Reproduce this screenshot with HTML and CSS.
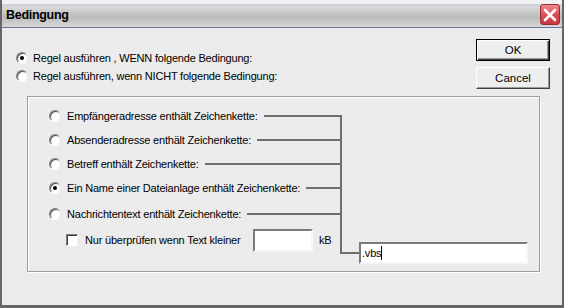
FILE: index.html
```html
<!DOCTYPE html>
<html lang="de">
<head>
    <meta charset="UTF-8">
    <title>Bedingung</title>
    <link rel="stylesheet" href="styles.css">
</head>
<body>
    <div class="window">
        <div class="titlebar">
            <span class="title">Bedingung</span>
            <span class="close-btn">
                <svg width="14" height="14" viewBox="0 0 14 14">
                    <path d="M2 2 L12 12 M12 2 L2 12" stroke="#fff" stroke-width="2.6" stroke-linecap="round"/>
                </svg>
            </span>
        </div>
        <div class="dialog-body">
            <div class="top">
                <div class="mode">
                    <div class="choice"><span class="radio checked"></span>Regel ausführen , WENN folgende Bedingung:</div>
                    <div class="choice"><span class="radio"></span>Regel ausführen, wenn NICHT folgende Bedingung:</div>
                </div>
                <div class="buttons">
                    <button class="btn default">OK</button>
                    <button class="btn">Cancel</button>
                </div>
            </div>

            <div class="group">
                <div class="tree-area">
                    <div class="tree">
                        <div class="option"><span class="radio"></span>Empfängeradresse enthält Zeichenkette:<span class="wire"></span></div>
                        <div class="option"><span class="radio"></span>Absenderadresse enthält Zeichenkette:<span class="wire"></span></div>
                        <div class="option"><span class="radio"></span>Betreff enthält Zeichenkette:<span class="wire"></span></div>
                        <div class="option"><span class="radio checked"></span>Ein Name einer Dateianlage enthält Zeichenkette:<span class="wire"></span></div>
                        <div class="option last"><span class="radio"></span>Nachrichtentext enthält Zeichenkette:<span class="wire"></span></div>
                        <div class="size-row">
                            <span class="checkbox"></span>
                            <span class="size-label">Nur überprüfen wenn Text kleiner</span>
                            <span class="field small"></span>
                            <span class="unit">kB</span>
                        </div>
                    </div>
                    <div class="target">
                        <span class="stub"></span>
                        <span class="field big">.vbs<span class="caret"></span></span>
                    </div>
                </div>
            </div>
        </div>
    </div>
</body>
</html>
```

FILE: styles.css
```css
body {
    margin: 0;
    font-family: "Liberation Sans", Arial, sans-serif;
    font-size: 11px;
    letter-spacing: -0.2px;
    color: #000;
}
.window {
    width: 564px;
    height: 308px;
    box-sizing: border-box;
    border: 2px solid #666;
    border-top: 0;
    border-bottom-width: 3px;
    background-color: #ececec;
    background-image: repeating-conic-gradient(#e9e9e9 0 25%, #eeeeee 0 50%);
    background-size: 2px 2px;
    display: flex;
    flex-direction: column;
}
.titlebar {
    height: 28px;
    border-bottom: 1px solid #7070a8;
    background: linear-gradient(#f2f2f2 0, #f2f2f2 4px, #b9b9d0 5px, #dcdcdc 6px, #c9c9c9 45%, #bcbcbc 65%, #d8d8d8 100%);
    display: flex;
    align-items: center;
    padding: 2px 2px 0 4px;
    box-sizing: border-box;
}
.title {
    font-weight: bold;
    font-size: 12.5px;
    letter-spacing: -0.3px;
    flex: 1;
}
.close-btn {
    width: 20px;
    height: 21px;
    box-sizing: border-box;
    border: 1px solid #9a2a30;
    border-radius: 3px;
    background: linear-gradient(#f08a8f, #d94a52 55%, #c83840);
    display: flex;
    align-items: center;
    justify-content: center;
}
.dialog-body {
    flex: 1;
    padding: 11px 12px 0 14px;
}
.top {
    display: flex;
    align-items: flex-start;
}
.mode {
    margin-top: 10px;
    flex: 1;
}
.choice {
    height: 18px;
    display: flex;
    align-items: center;
    gap: 5px;
}
.radio {
    width: 12px;
    height: 12px;
    box-sizing: border-box;
    border-radius: 50%;
    border: 1px solid;
    border-color: #808080 #e8e8e8 #ffffff #808080;
    background: radial-gradient(circle at 60% 60%, #ffffff 40%, #d8d8d8 100%);
    box-shadow: inset 1px 1px 0 #5a5a5a;
    display: inline-flex;
    align-items: center;
    justify-content: center;
    flex: none;
}
.radio.checked::after {
    content: "";
    width: 4px;
    height: 4px;
    border-radius: 50%;
    background: #000;
}
.buttons {
    display: flex;
    flex-direction: column;
    gap: 6px;
}
.btn {
    width: 74px;
    height: 22px;
    font-family: "Liberation Sans", Arial, sans-serif;
    font-size: 11.5px;
    background: #eeeeee;
    border: 1px solid;
    border-color: #ffffff #404040 #404040 #ffffff;
    box-shadow: inset -1px -1px 0 #9a9a9a;
    padding: 0;
}
.btn.default {
    border: 1px solid #000;
    box-shadow: inset 1px 1px 0 #fff, inset -1px -1px 0 #404040, inset -2px -2px 0 #9a9a9a;
}
.group {
    margin: 7px 10px 0 11px;
    height: 176px;
    box-sizing: border-box;
    border: 1px solid #9c9c9c;
    box-shadow: 1px 1px 0 #fff, inset 1px 1px 0 #fff;
    padding: 18px 0 0 21px;
}
.tree-area {
    display: flex;
    align-items: flex-start;
}
.tree {
    width: 291px;
    border-right: 2px solid #6e6e6e;
    padding-bottom: 2px;
}
.option {
    height: 24px;
    display: flex;
    align-items: center;
    gap: 6px;
}
.option:first-child {
    margin-top: -11px;
}
.option.last {
    margin-top: 2px;
}
.wire {
    flex: 1;
    height: 2px;
    background: #6e6e6e;
}
.size-row {
    height: 24px;
    margin-top: 2px;
    display: flex;
    align-items: center;
    padding-left: 17px;
}
.checkbox {
    width: 12px;
    height: 12px;
    box-sizing: border-box;
    border: 1px solid;
    border-color: #808080 #f4f4f4 #ffffff #808080;
    box-shadow: inset 1px 1px 0 #404040;
    background: #fff;
    margin-right: 7px;
}
.size-label {
    width: 168px;
    white-space: nowrap;
}
.field {
    box-sizing: border-box;
    background: #fff;
    border: 2px solid;
    border-color: #7a7a7a #f6f6f6 #f6f6f6 #7a7a7a;
    display: flex;
    align-items: center;
}
.field.small {
    width: 60px;
    height: 23px;
}
.unit {
    margin-left: 6px;
}
.target {
    align-self: flex-end;
    margin-bottom: -10px;
    display: flex;
    align-items: center;
}
.stub {
    width: 17px;
    height: 2px;
    background: #6e6e6e;
}
.field.big {
    width: 169px;
    height: 22px;
    padding-left: 1px;
}
.caret {
    width: 1px;
    height: 14px;
    background: #000;
}
```
